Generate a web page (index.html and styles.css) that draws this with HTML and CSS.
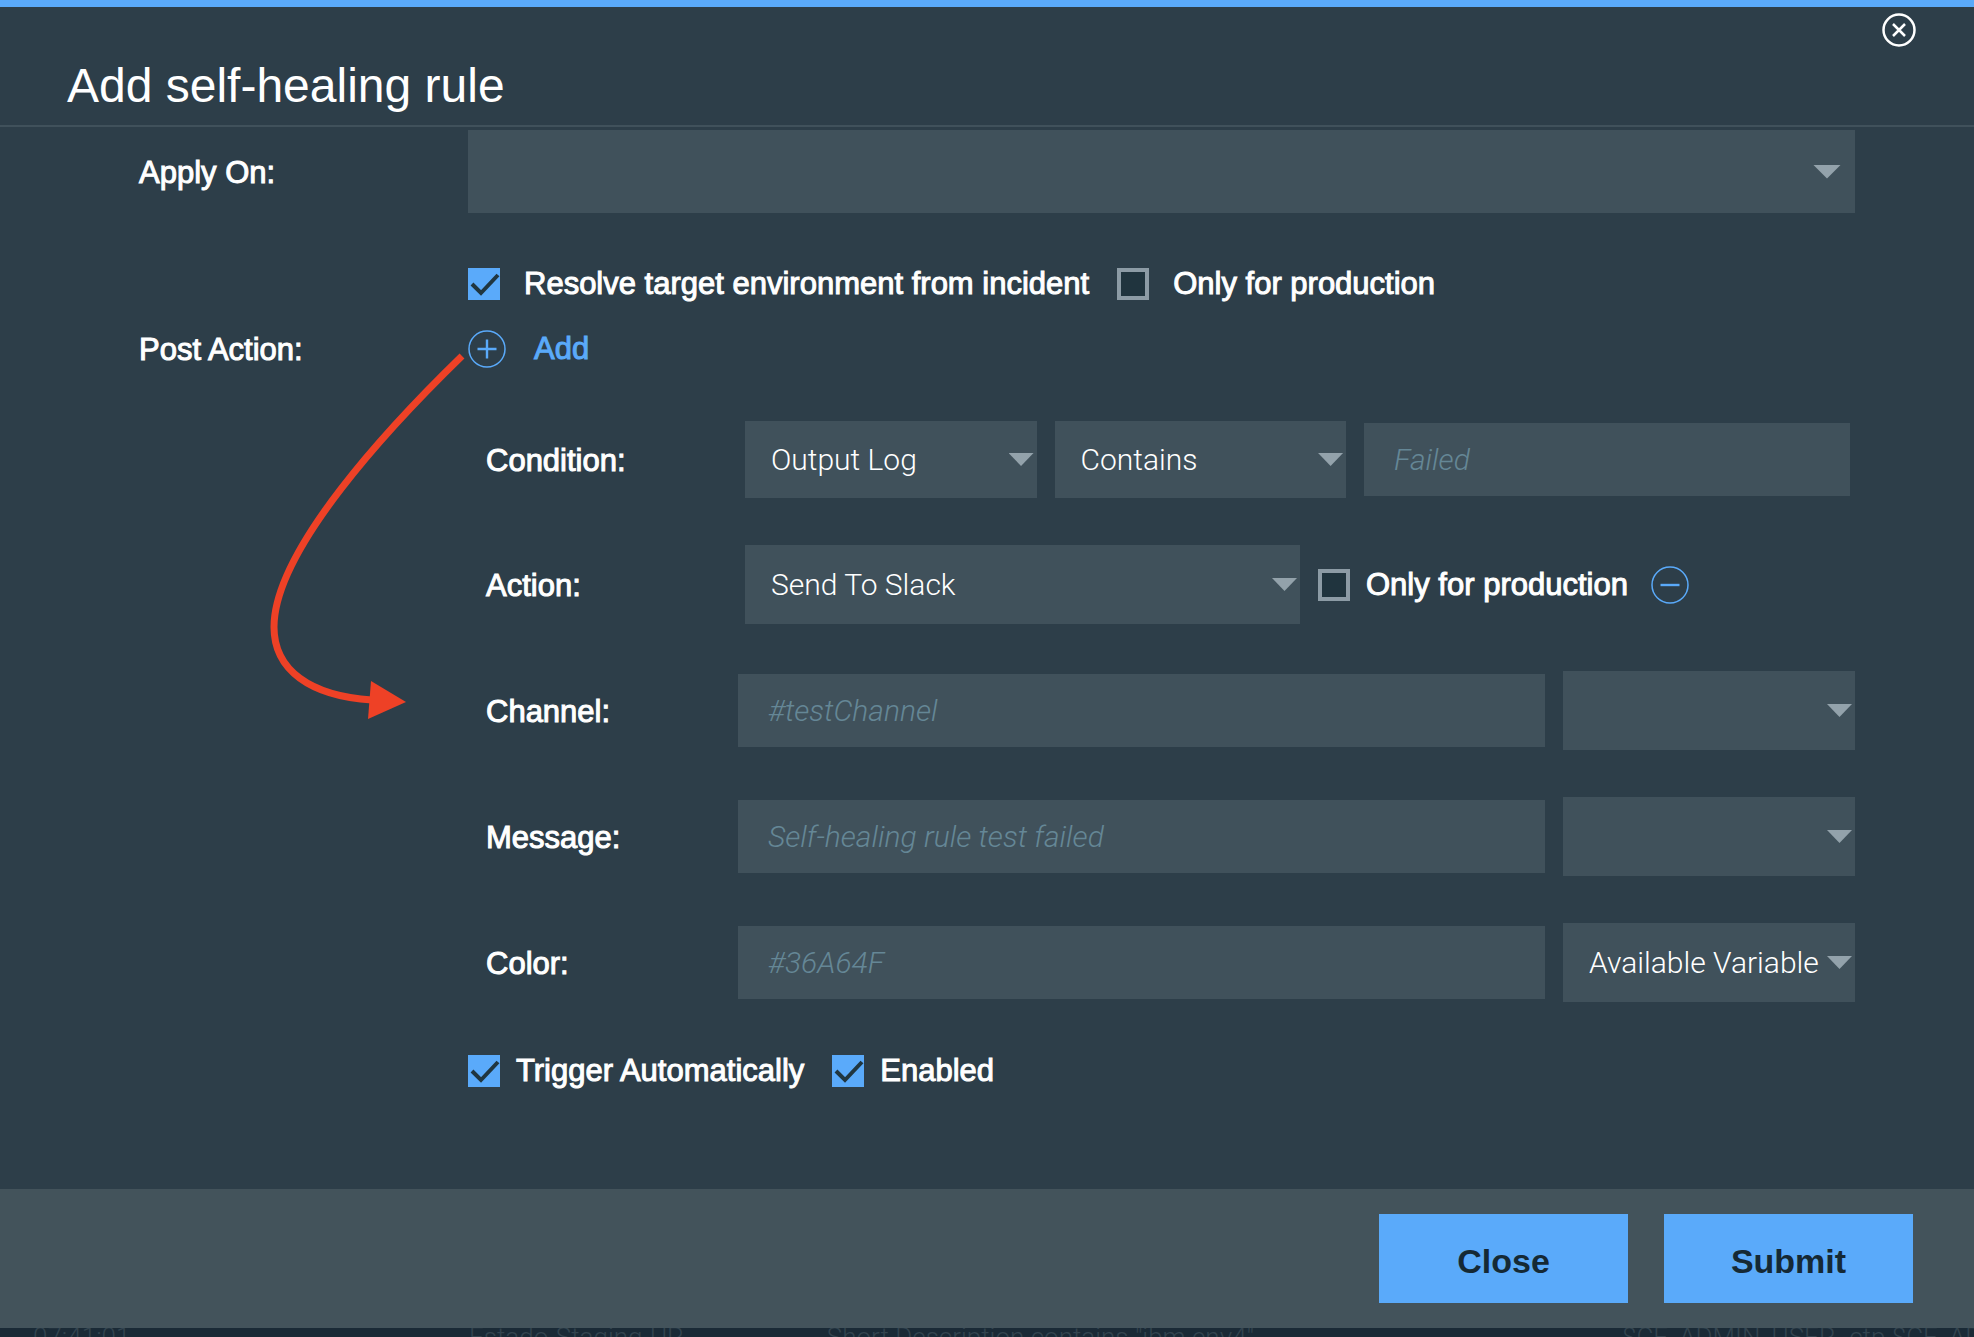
FILE: index.html
```html
<!DOCTYPE html>
<html lang="en">
<head>
<meta charset="utf-8">
<title>Add self-healing rule</title>
<link rel="stylesheet" href="styles.css">
</head>
<body>
<form class="dialog">
  <header class="dialog-header">
    <button class="icon-button dismiss" type="button" aria-label="Dismiss">
      <svg width="34" height="34" viewBox="0 0 34 34" fill="none" stroke="#fff">
        <circle cx="17" cy="17" r="15.500" stroke-width="2.500"/>
        <path d="M11 11 23 23M23 11 11 23" stroke-width="2.500"/>
      </svg>
    </button>
    <h1 class="title">Add self-healing rule</h1>
  </header>

  <main class="dialog-body">
    <div class="row">
      <label class="label" for="apply-on">Apply On:</label>
      <span class="select large"><select id="apply-on"><option></option></select></span>
    </div>

    <div class="row indent checks first-checks">
      <label class="check wide"><input type="checkbox" checked>Resolve target environment from incident</label>
      <label class="check wide"><input type="checkbox">Only for production</label>
    </div>

    <div class="row post-action">
      <span class="label">Post Action:</span>
      <button class="add" type="button">
        <svg width="38" height="38" viewBox="0 0 38 38" fill="none" stroke="#5aaafa">
          <circle cx="19" cy="19" r="18" stroke-width="1.500"/>
          <path d="M9.500 19h19M19 9.500v19" stroke-width="2.400"/>
        </svg>
        Add
      </button>
    </div>

    <section class="action-group">
      <div class="row">
        <label class="sub-label" for="source">Condition:</label>
        <div class="fields condition">
          <span class="select"><select id="source"><option>Output Log</option></select></span>
          <span class="select"><select aria-label="Operator"><option>Contains</option></select></span>
          <input class="text" type="text" placeholder="Failed" aria-label="Value">
        </div>
      </div>
      <div class="row">
        <label class="sub-label" for="action">Action:</label>
        <div class="fields action">
          <span class="select"><select id="action"><option>Send To Slack</option></select></span>
          <label class="check"><input type="checkbox">Only for production</label>
          <button class="icon-button" type="button" aria-label="Remove">
            <svg width="38" height="38" viewBox="0 0 38 38" fill="none" stroke="#5aaafa">
              <circle cx="19" cy="19" r="18" stroke-width="1.500"/>
              <path d="M9.500 19h19" stroke-width="2.400"/>
            </svg>
          </button>
        </div>
      </div>
      <div class="row">
        <label class="sub-label" for="channel">Channel:</label>
        <div class="fields message">
          <input class="text" id="channel" type="text" placeholder="#testChannel">
          <span class="select"><select aria-label="Channel variable"><option></option></select></span>
        </div>
      </div>
      <div class="row">
        <label class="sub-label" for="message">Message:</label>
        <div class="fields message">
          <input class="text" id="message" type="text" placeholder="Self-healing rule test failed">
          <span class="select"><select aria-label="Message variable"><option></option></select></span>
        </div>
      </div>
      <div class="row">
        <label class="sub-label" for="color">Color:</label>
        <div class="fields message">
          <input class="text" id="color" type="text" placeholder="#36A64F">
          <span class="select"><select aria-label="Color variable"><option>Available Variable</option></select></span>
        </div>
      </div>
    </section>

    <div class="row indent checks last-checks">
      <label class="check"><input type="checkbox" checked>Trigger Automatically</label>
      <label class="check"><input type="checkbox" checked>Enabled</label>
    </div>

    <svg class="pointer" width="150" height="376" viewBox="262 350 150 376" aria-hidden="true">
      <path d="M462 356C390 426 274 550 274 627C274 670 310 696 372 700" fill="none" stroke="#ee4126" stroke-width="7"/>
      <path d="M371 681 406 702 368 719Z" fill="#ee4126"/>
    </svg>
  </main>

  <footer class="dialog-footer">
    <button class="primary" type="button">Close</button>
    <button class="primary" type="submit">Submit</button>
  </footer>
</form>

<div class="backdrop">
  <span>07:41:01</span>
  <span>Estado-Staging-UP</span>
  <span>- Short Description contains "ibm.env4"</span>
  <span>$CF_ADMIN_USER -ctp $CF_ADMIN</span>
</div>
</body>
</html>
```
FILE: styles.css
```css
* {
  box-sizing: border-box;
}

body {
  margin: 0;
  height: 100vh;
  display: flex;
  flex-direction: column;
  overflow: hidden;
  background: #1a2a36;
  color: #fff;
  font: 31px/40px "Liberation Sans", Arial, sans-serif;
}

button,
input,
select {
  margin: 0;
  padding: 0;
  border: 0;
  border-radius: 0;
  background: none;
  color: inherit;
  font: inherit;
}

svg {
  display: block;
}

.dialog {
  flex: 1;
  display: flex;
  flex-direction: column;
  border-top: 7px solid #5aaafa;
  background: #2d3e49;
}

.dialog-header {
  padding: 6px 58px 10px 67px;
  border-bottom: 2px solid #40515b;
}

.dismiss {
  margin-left: auto;
}

.icon-button {
  display: block;
  width: max-content;
}

.title {
  margin: 10px 0 0;
  font-size: 48px;
  font-weight: 400;
  line-height: 58px;
}

.dialog-body {
  position: relative;
  flex: 1;
  padding: 3px 119px 0 139px;
}

.row {
  display: flex;
  align-items: center;
}

.label,
.sub-label,
.check,
.add {
  -webkit-text-stroke: 1px currentColor;
}

.label {
  flex: none;
  width: 329px;
  padding-top: 2px;
}

.indent {
  padding-left: 329px;
}

.select {
  display: grid;
  flex: 1;
  height: 79px;
  align-items: center;
  background: #40515b;
}

.select select {
  grid-area: 1 / 1;
  width: 100%;
  height: 100%;
  padding: 0 30px 0 26px;
  appearance: none;
  font-family: Roboto, "Liberation Sans", sans-serif;
  font-size: 30px;
  font-weight: 300;
}

.select::after {
  content: "";
  grid-area: 1 / 1;
  justify-self: end;
  width: 25px;
  height: 13px;
  margin-right: 3px;
  background: #93a2ab;
  clip-path: polygon(0 0, 100% 0, 50% 100%);
  pointer-events: none;
}

.select.large {
  height: 83px;
}

.select.large::after {
  width: 28px;
  height: 14px;
  margin-right: 14px;
}

.checks {
  gap: 28px;
}

.first-checks {
  margin-top: 51px;
}

.last-checks {
  margin-top: 49px;
}

.check {
  display: flex;
  align-items: center;
  gap: 16px;
  white-space: nowrap;
}

.check.wide {
  gap: 24px;
}

.check input {
  flex: none;
  width: 32px;
  height: 32px;
  border: 4px solid #8c9ba5;
  appearance: none;
  background: #20343e;
}

.check input:checked {
  border: 0;
  background: #5aaafa url("data:image/svg+xml,%3Csvg xmlns='http://www.w3.org/2000/svg' viewBox='0 0 32 32'%3E%3Cpath d='M4 16l9 9L30 7' fill='none' stroke='%23203640' stroke-width='4'/%3E%3C/svg%3E");
}

.post-action {
  margin-top: 24px;
}

.add {
  display: flex;
  align-items: center;
  gap: 28px;
  color: #5aaafa;
}

.action-group {
  display: flex;
  flex-direction: column;
  gap: 47px;
  margin: 51px 0 0 347px;
}

.sub-label {
  flex: none;
  width: 252px;
  padding-top: 2px;
}

.fields {
  flex: 1;
  display: grid;
  align-items: center;
  gap: 18px;
}

.condition {
  grid-template-columns: 3fr 3fr 5fr;
  padding: 0 5px 0 7px;
}

.condition .select {
  height: 77px;
}

.action {
  grid-template-columns: 1fr 315px 38px;
  padding: 0 166px 0 7px;
}

.message {
  grid-template-columns: 1fr 292px;
}

.text {
  width: 100%;
  height: 73px;
  padding: 0 30px;
  background: #40515b;
  font-family: Roboto, "Liberation Sans", sans-serif;
  font-size: 30px;
  font-weight: 300;
}

.text::placeholder {
  color: #658796;
  font-style: italic;
  opacity: 1;
}

.pointer {
  position: absolute;
  left: 262px;
  top: 223px;
  overflow: visible;
}

.dialog-footer {
  display: flex;
  justify-content: flex-end;
  gap: 36px;
  padding: 25px 61px;
  background: #43535b;
}

.primary {
  width: 249px;
  height: 89px;
  padding-top: 4px;
  background: #5aaafa;
  color: #152935;
  font-size: 34px;
  font-weight: 700;
}

.backdrop {
  display: grid;
  grid-template-columns: 436px 344px 809px 1fr;
  height: 9px;
  padding-left: 33px;
  overflow: hidden;
  color: #33444f;
  font: 300 26px/18px Roboto, "Liberation Sans", sans-serif;
  white-space: nowrap;
}
```
